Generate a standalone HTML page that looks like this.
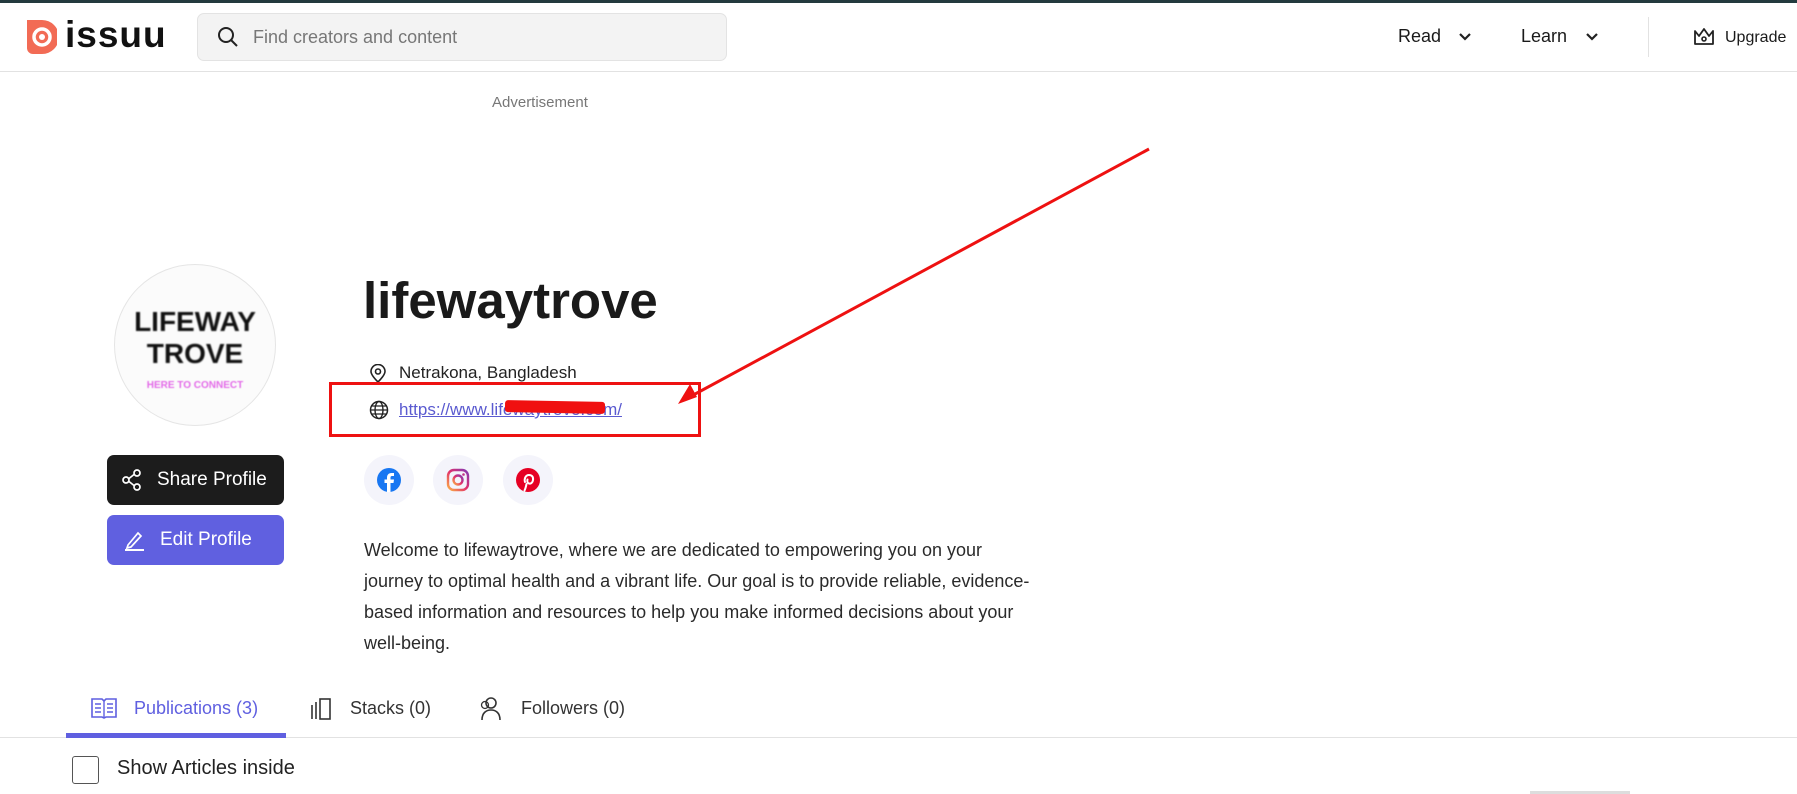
<!DOCTYPE html>
<html><head><meta charset="utf-8">
<style>
*{margin:0;padding:0;box-sizing:border-box}
body{width:1797px;height:794px;overflow:hidden;background:#fff;font-family:"Liberation Sans",sans-serif;color:#1a1a1a;position:relative}
.a{position:absolute;white-space:nowrap}
</style></head><body>
<div class="a" style="left:0;top:0;width:1797px;height:3px;background:#233a3e"></div>
<div class="a" style="left:0;top:71px;width:1797px;height:1px;background:#e2e2e2"></div>
<svg class="a" style="left:27px;top:20px" width="30" height="34" viewBox="0 0 30 34"><path d="M0 0H15A15 15 0 0 1 15 34H6A6 6 0 0 1 0 28Z" fill="#f26b55"/><circle cx="15" cy="17" r="8" fill="none" stroke="#fff" stroke-width="3.5"/><circle cx="15" cy="17" r="3" fill="#fff"/></svg>
<div class="a" style="left:65px;top:14px;font-size:37px;font-weight:bold;letter-spacing:1px;color:#111">issuu</div>
<div class="a" style="left:197px;top:13px;width:530px;height:48px;background:#f3f3f3;border:1px solid #e3e3e3;border-radius:7px"></div>
<svg class="a" style="left:217px;top:26px" width="22" height="22" viewBox="0 0 22 22"><circle cx="9" cy="9" r="7" fill="none" stroke="#222" stroke-width="2"/><path d="M14 14L20 20" stroke="#222" stroke-width="2"/></svg>
<div class="a" style="left:253px;top:27px;font-size:18px;color:#777">Find creators and content</div>
<div class="a" style="left:1398px;top:26px;font-size:18px">Read</div>
<svg class="a" style="left:1458px;top:32px" width="14" height="10"><path d="M2 2L7 7L12 2" fill="none" stroke="#222" stroke-width="2.2"/></svg>
<div class="a" style="left:1521px;top:26px;font-size:18px">Learn</div>
<svg class="a" style="left:1585px;top:32px" width="14" height="10"><path d="M2 2L7 7L12 2" fill="none" stroke="#222" stroke-width="2.2"/></svg>
<div class="a" style="left:1648px;top:17px;width:1px;height:40px;background:#e2e2e2"></div>
<svg class="a" style="left:1693px;top:27px" width="22" height="20" viewBox="0 0 22 20"><path d="M2 4L6 9L11 2L16 9L20 4V17H2Z" fill="none" stroke="#222" stroke-width="1.8" stroke-linejoin="round"/><circle cx="11" cy="12" r="2" fill="none" stroke="#222" stroke-width="1.6"/></svg>
<div class="a" style="left:1725px;top:29px;font-size:16px">Upgrade</div>
<div class="a" style="left:492px;top:94px;font-size:15px;color:#777">Advertisement</div>
<div class="a" style="left:114px;top:264px;width:162px;height:162px;border-radius:50%;border:1px solid #e5e5e5;background:#fbfbfb"></div>
<div class="a" style="left:114px;top:306px;width:162px;text-align:center;font-size:28px;font-weight:bold;line-height:32px;color:#111;filter:blur(0.8px)">LIFEWAY<br>TROVE</div>
<div class="a" style="left:114px;top:380px;width:162px;text-align:center;font-size:10px;font-weight:bold;color:#e36be8;filter:blur(0.6px)">HERE TO CONNECT</div>
<div class="a" style="left:107px;top:455px;width:177px;height:50px;background:#1c1c1c;border-radius:7px"></div>
<svg class="a" style="left:121px;top:469px" width="22" height="22" viewBox="0 0 22 22"><circle cx="16" cy="4" r="3" fill="none" stroke="#fff" stroke-width="1.7"/><circle cx="5" cy="11" r="3" fill="none" stroke="#fff" stroke-width="1.7"/><circle cx="16" cy="18" r="3" fill="none" stroke="#fff" stroke-width="1.7"/><path d="M8 9.5L13 5.5M8 12.5L13 16.5" stroke="#fff" stroke-width="1.7"/></svg>
<div class="a" style="left:157px;top:469px;font-size:19px;color:#fff">Share Profile</div>
<div class="a" style="left:107px;top:515px;width:177px;height:50px;background:#6060e0;border-radius:7px"></div>
<svg class="a" style="left:124px;top:528px" width="22" height="24" viewBox="0 0 22 24"><path d="M4 17L14 5L17 8L7 19L3 20Z" fill="none" stroke="#fff" stroke-width="1.7"/><path d="M1 22H20" stroke="#fff" stroke-width="2"/></svg>
<div class="a" style="left:160px;top:529px;font-size:19px;color:#fff">Edit Profile</div>
<div class="a" style="left:363px;top:271px;font-size:51px;font-weight:bold;color:#1a1a1a">lifewaytrove</div>
<svg class="a" style="left:369px;top:364px" width="18" height="20" viewBox="0 0 18 20"><path d="M9 18C4 13 2 10 2 7.5A7 7 0 0 1 16 7.5C16 10 14 13 9 18Z" fill="none" stroke="#222" stroke-width="1.6"/><circle cx="9" cy="7.5" r="2.5" fill="none" stroke="#222" stroke-width="1.6"/></svg>
<div class="a" style="left:399px;top:363px;font-size:17px;color:#222">Netrakona, Bangladesh</div>
<svg class="a" style="left:369px;top:400px" width="20" height="20" viewBox="0 0 20 20"><circle cx="10" cy="10" r="8.5" fill="none" stroke="#222" stroke-width="1.5"/><ellipse cx="10" cy="10" rx="4" ry="8.5" fill="none" stroke="#222" stroke-width="1.4"/><path d="M1.5 10H18.5M3 6H17M3 14H17" stroke="#222" stroke-width="1.3"/></svg>
<div class="a" style="left:399px;top:400px;font-size:17px;color:#5a5ad0;text-decoration:underline">https://www.lifewaytrove.com/</div>
<div class="a" style="left:505px;top:401px;width:100px;height:12px;background:#f01010;border-radius:3px;transform:rotate(1deg)"></div>
<div class="a" style="left:329px;top:382px;width:372px;height:55px;border:3px solid #ee1111"></div>
<svg class="a" style="left:0;top:0" width="1797" height="794"><path d="M1149 149L684 400" stroke="#ee1111" stroke-width="3"/><path d="M678 404L690 384L697 397Z" fill="#ee1111"/></svg>
<div class="a" style="left:364px;top:455px;width:50px;height:50px;border-radius:50%;background:#f4f4fb"></div>
<div class="a" style="left:433px;top:455px;width:50px;height:50px;border-radius:50%;background:#f4f4fb"></div>
<div class="a" style="left:503px;top:455px;width:50px;height:50px;border-radius:50%;background:#f4f4fb"></div>
<svg class="a" style="left:377px;top:468px" width="24" height="24" viewBox="0 0 24 24"><circle cx="12" cy="12" r="12" fill="#1877f2"/><path d="M13.5 24V15H16.5L17 11.5H13.5V9.5C13.5 8.5 14 8 15 8H17V5H14.5C11.5 5 10 7 10 9.5V11.5H7.5V15H10V24Z" fill="#fff"/></svg>
<svg class="a" style="left:446px;top:468px" width="24" height="24" viewBox="0 0 24 24"><defs><linearGradient id="ig" x1="0" y1="1" x2="1" y2="0"><stop offset="0" stop-color="#fcaf45"/><stop offset=".5" stop-color="#e1306c"/><stop offset="1" stop-color="#833ab4"/></linearGradient></defs><rect x="2" y="2" width="20" height="20" rx="6" fill="none" stroke="url(#ig)" stroke-width="2.4"/><circle cx="12" cy="12" r="4.5" fill="none" stroke="url(#ig)" stroke-width="2.4"/><circle cx="17.5" cy="6.5" r="1.3" fill="#c13584"/></svg>
<svg class="a" style="left:516px;top:468px" width="24" height="24" viewBox="0 0 24 24"><circle cx="12" cy="12" r="12" fill="#e60023"/><path d="M10.5 16C10 18.5 9.5 20.5 8.5 22.5M9 14C8 11 9.5 7 13 7C16 7 17.5 9 17 12C16.5 15 14.5 16 13 15.5C11.5 15 11 13.5 11.5 11.5" fill="none" stroke="#fff" stroke-width="2" stroke-linecap="round"/></svg>
<div class="a" style="left:364px;top:535px;font-size:18px;line-height:31px;color:#2a2a2a">Welcome to lifewaytrove, where we are dedicated to empowering you on your<br>journey to optimal health and a vibrant life. Our goal is to provide reliable, evidence-<br>based information and resources to help you make informed decisions about your<br>well-being.</div>
<div class="a" style="left:0;top:737px;width:1797px;height:1px;background:#e2e2e2"></div>
<div class="a" style="left:66px;top:733px;width:220px;height:5px;background:#5f5fe0"></div>
<svg class="a" style="left:91px;top:697px" width="26" height="22" viewBox="0 0 26 22"><path d="M1 2H11L13 4L15 2H25V20H15L13 21L11 20H1Z" fill="none" stroke="#5f5fe0" stroke-width="1.6"/><path d="M13 4V21M4 7H10M4 11H10M4 15H10M16 7H22M16 11H22M16 15H22" stroke="#5f5fe0" stroke-width="1.4"/></svg>
<div class="a" style="left:134px;top:698px;font-size:18px;color:#5f5fe0">Publications (3)</div>
<svg class="a" style="left:309px;top:697px" width="24" height="24" viewBox="0 0 24 24"><rect x="11" y="2" width="10" height="20" fill="none" stroke="#333" stroke-width="1.6"/><path d="M7 5V22M3 8V22" stroke="#333" stroke-width="1.6"/></svg>
<div class="a" style="left:350px;top:698px;font-size:18px;color:#333">Stacks (0)</div>
<svg class="a" style="left:479px;top:696px" width="24" height="26" viewBox="0 0 24 26"><circle cx="12" cy="7" r="5" fill="none" stroke="#333" stroke-width="1.6"/><path d="M3 24C3 17 7 14 12 14C17 14 21 17 21 24" fill="none" stroke="#333" stroke-width="1.6"/><circle cx="6" cy="9" r="3.5" fill="none" stroke="#333" stroke-width="1.3"/></svg>
<div class="a" style="left:521px;top:698px;font-size:18px;color:#333">Followers (0)</div>
<div class="a" style="left:72px;top:756px;width:27px;height:28px;border:1.5px solid #555;border-radius:3px"></div>
<div class="a" style="left:117px;top:757px;font-size:20px;color:#222">Show Articles inside</div>
<div class="a" style="left:1530px;top:791px;width:100px;height:3px;background:#ddd"></div>
</body></html>
